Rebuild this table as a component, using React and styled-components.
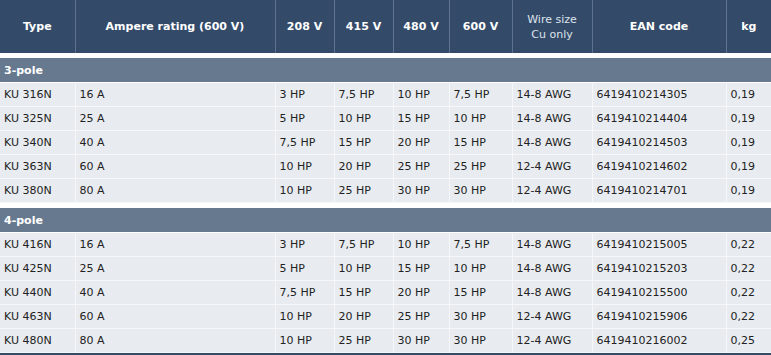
import React from 'react';
import styled, { createGlobalStyle } from 'styled-components';

const GlobalStyle = createGlobalStyle`
  body {
    margin: 0;
    background: #fff;
    font-family: "DejaVu Sans", Verdana, sans-serif;
  }
`;

const Table = styled.table`
  width: 771px;
  border-collapse: collapse;
  table-layout: fixed;
  font-size: 11px;
  color: #222;
`;

const HeadCell = styled.th`
  height: 53px;
  padding: 0 4px;
  background: #344a69;
  font-weight: ${p => (p.light ? 'normal' : 'bold')};
  color: ${p => (p.light ? '#dde4ec' : '#fff')};
  line-height: 15px;
  text-align: center;
  border-right: 1px solid #5f7390;
  &:last-child { border-right: none; }
`;

const Spacer = styled.td`
  height: 5px;
  padding: 0;
  background: #fff;
`;

const GroupCell = styled.td`
  height: 24px;
  padding: 0 4px;
  background: #66798f;
  color: #fff;
  font-weight: bold;
  font-size: 11px;
  border-bottom: 1px solid #fff;
`;

const Cell = styled.td`
  height: 23px;
  padding: 0 4px;
  background: #e8ecf0;
  border: 1px solid #f6f7f9;
  border-top: none;
  white-space: nowrap;
  &:first-child { border-left: none; }
`;

const Footer = styled.td`
  height: 4px;
  padding: 0;
  background: #344a69;
`;

const widths = [75, 200, 59, 59, 56, 63, 80, 134, 45];

const groups = [
  {
    name: '3-pole',
    rows: [
      ['KU 316N', '16 A', '3 HP', '7,5 HP', '10 HP', '7,5 HP', '14-8 AWG', '6419410214305', '0,19'],
      ['KU 325N', '25 A', '5 HP', '10 HP', '15 HP', '10 HP', '14-8 AWG', '6419410214404', '0,19'],
      ['KU 340N', '40 A', '7,5 HP', '15 HP', '20 HP', '15 HP', '14-8 AWG', '6419410214503', '0,19'],
      ['KU 363N', '60 A', '10 HP', '20 HP', '25 HP', '25 HP', '12-4 AWG', '6419410214602', '0,19'],
      ['KU 380N', '80 A', '10 HP', '25 HP', '30 HP', '30 HP', '12-4 AWG', '6419410214701', '0,19'],
    ],
  },
  {
    name: '4-pole',
    rows: [
      ['KU 416N', '16 A', '3 HP', '7,5 HP', '10 HP', '7,5 HP', '14-8 AWG', '6419410215005', '0,22'],
      ['KU 425N', '25 A', '5 HP', '10 HP', '15 HP', '10 HP', '14-8 AWG', '6419410215203', '0,22'],
      ['KU 440N', '40 A', '7,5 HP', '15 HP', '20 HP', '15 HP', '14-8 AWG', '6419410215500', '0,22'],
      ['KU 463N', '60 A', '10 HP', '20 HP', '25 HP', '30 HP', '12-4 AWG', '6419410215906', '0,22'],
      ['KU 480N', '80 A', '10 HP', '25 HP', '30 HP', '30 HP', '12-4 AWG', '6419410216002', '0,25'],
    ],
  },
];

export default function App() {
  return (
    <>
      <GlobalStyle />
      <Table>
        <colgroup>
          {widths.map((w, i) => <col key={i} style={{ width: w }} />)}
        </colgroup>
        <thead>
          <tr>
            <HeadCell>Type</HeadCell>
            <HeadCell>Ampere rating (600 V)</HeadCell>
            <HeadCell>208 V</HeadCell>
            <HeadCell>415 V</HeadCell>
            <HeadCell>480 V</HeadCell>
            <HeadCell>600 V</HeadCell>
            <HeadCell light>Wire size<br />Cu only</HeadCell>
            <HeadCell>EAN code</HeadCell>
            <HeadCell>kg</HeadCell>
          </tr>
        </thead>
        {groups.map(g => (
          <tbody key={g.name}>
            <tr><Spacer colSpan={9} /></tr>
            <tr><GroupCell colSpan={9}>{g.name}</GroupCell></tr>
            {g.rows.map(r => (
              <tr key={r[0]}>
                {r.map((v, i) => <Cell key={i}>{v}</Cell>)}
              </tr>
            ))}
          </tbody>
        ))}
        <tfoot>
          <tr><Footer colSpan={9} /></tr>
        </tfoot>
      </Table>
    </>
  );
}
